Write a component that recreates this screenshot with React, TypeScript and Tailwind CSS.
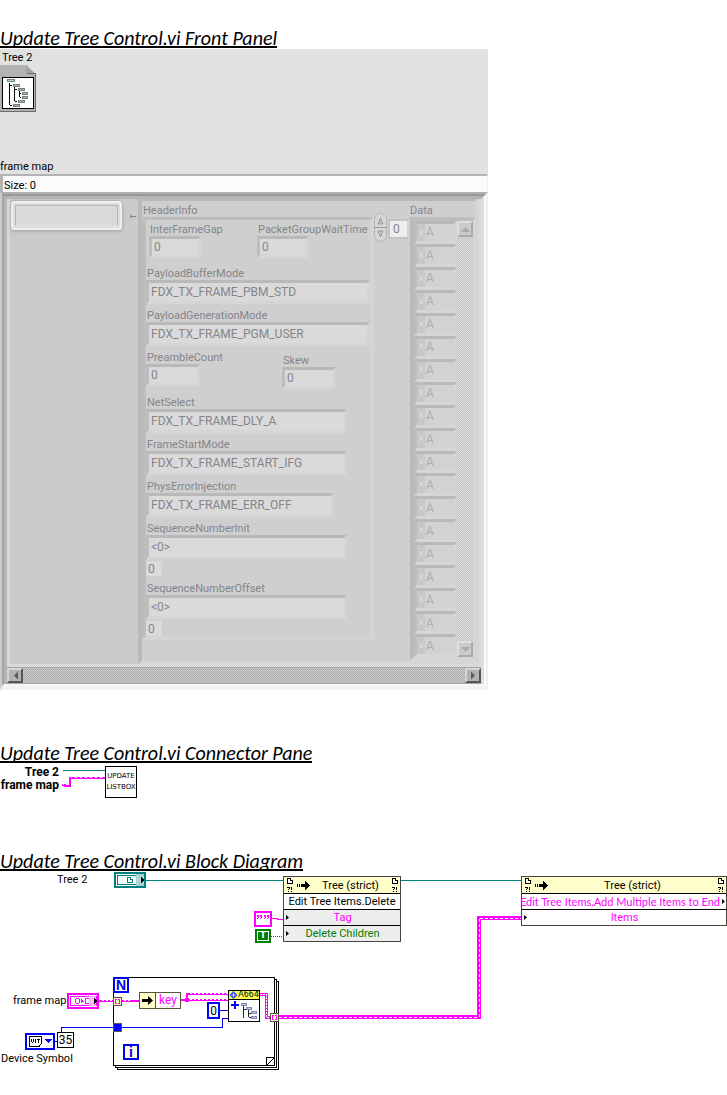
import React from "react";

const bevel =
  "border-[3px] border-t-[#b9b9b9] border-l-[#bdbdbd] border-r-[#d4d4d4] border-b-[#d6d6d6]";

function Heading({ children }: { children: React.ReactNode }) {
  return (
    <h2 className="w-fit border-b-2 border-black pt-1.5 font-['Carlito','Lato',sans-serif] text-[20px] leading-4 italic whitespace-nowrap text-black">
      {children}
    </h2>
  );
}

function Field({ id, label, value, width, size = "h-6", tone = "" }: { id: string; label: string; value: string; width: string; size?: string; tone?: string }) {
  return (
    <div className={"flex flex-col " + tone}>
      <label htmlFor={id} className="pt-[3px] pl-px leading-[13px] whitespace-nowrap">{label}</label>
      <input id={id} readOnly defaultValue={value} className={`${bevel} ${size} ${width} bg-[#dadada] px-0.5 text-xs outline-none`} />
    </div>
  );
}

function Offset({ label }: { label: string }) {
  return <input aria-label={label} readOnly defaultValue="0" className="mt-0.5 block h-[15px] w-4 bg-[#dadada] px-0.5 text-xs outline-none" />;
}

function TreeRefIcon() {
  return (
    <svg width="36" height="48" viewBox="0 0 36 48" shapeRendering="crispEdges" aria-hidden="true">
      <path d="M0 0H26V8H35V46H0Z" fill="#b2b2b2" />
      <path d="M26 0V8H35Z" fill="#a4a4a4" />
      <path d="M26.500 8.500H35.500V46.500H0" fill="none" stroke="#6d6d6d" />
      <rect x="2.500" y="12.500" width="31" height="31" fill="#fff" stroke="#000" />
      <path d="M9.500 18V40M9.500 20.500H12M9.500 40.500H12M14.500 22V36M14.500 24.500H17M14.500 36.500H17M19.500 26V32M19.500 28.500H21M19.500 32.500H21" stroke="#000" fill="none" />
      <g fill="#9fb0ab" stroke="#77827f">
        <rect x="7.500" y="14.500" width="7" height="2" fill="#9fd6c8" />
        <rect x="13.500" y="19.500" width="6" height="2" />
        <rect x="18.500" y="23.500" width="6" height="2" />
        <rect x="22.500" y="27.500" width="5" height="2" />
        <rect x="22.500" y="31.500" width="5" height="2" />
        <rect x="18.500" y="35.500" width="6" height="2" />
        <rect x="13.500" y="39.500" width="6" height="2" />
      </g>
    </svg>
  );
}

function Arrow({ d, fill }: { d: string; fill: string }) {
  return (
    <svg width="9" height="9" viewBox="0 0 9 9" aria-hidden="true"><path d={d} fill={fill} /></svg>
  );
}

function FrontPanel() {
  return (
    <section className="mt-px w-fit bg-[#e1e1e1] text-[11px] text-black">
      <div className="flex h-[125px] flex-col justify-between">
        <div className="flex flex-col items-start">
          <span className="pt-0.5 pl-0.5 leading-[14px]">Tree 2</span>
          <TreeRefIcon />
        </div>
        <span className="leading-[14px]">frame map</span>
      </div>
      <div className="border-t-2 border-r border-l-[3px] border-[#b4b4b4] border-r-[#eee]">
        <div className="bg-[#fbfbfb] pt-[3px] pl-px leading-[13px]">Size: 0</div>
      </div>

      <div className="border-2 border-t-[#b0b0b0] border-r-[#f0f0f0] border-b-4 border-b-[#f2f2f2] border-l-[#cbcbcb]">
        <div className="border-2 border-t-[#989898] border-r-[#fafafa] border-b-[#f7f7f7] border-l-[#a4a4a4]">
          <div className="border-[3px] border-b-0 border-t-[#b4b4b4] border-r-[#dedede] border-l-[#b4b4b4] bg-[#cacaca] text-[#85858a]">
            <div className="flex border-[3px] border-t-0 border-[#d9d9d9]">
              <div className="flex w-32 items-start gap-1.5 pt-px">
                <div className="rounded border border-[#b5b5b5] bg-[#dedede] shadow">
                  <div className="rounded border-2 border-[#efefef] p-0.5">
                    <input aria-label="Frame key" readOnly className="block h-[21px] w-[103px] border border-[#b4b4b4] border-b-[#e5e5e5] bg-[#d9d9d9] outline-none" />
                  </div>
                </div>
                <svg width="8" height="24" viewBox="0 0 8 24" aria-hidden="true"><path d="M1 16.500H7M2 14.500V18L4 16" fill="none" stroke="#858585" /></svg>
              </div>

              <div className="flex border-4 border-t-2 border-r-[3px] border-b-[3px] border-t-[#bababa] border-r-[#d4d4d4] border-b-[#d6d6d6] border-l-[#b9b9b9] bg-[#cfcfcf]">
                <div className="flex flex-col">
                  <div className="pt-[3px] pl-px leading-[13px]">HeaderInfo</div>
                  <div className="flex h-[423px] w-[232px] flex-col gap-0.5 border-4 border-t-[3px] border-t-[#bdbdbd] border-r-[#d4d4d4] border-b-[#d4d4d4] border-l-[#bdbdbd]">
                    <div className="mb-1 flex gap-14 pl-[3px]">
                      <Field id="gap" label="InterFrameGap" value="0" width="w-[52px]" size="h-[22px]" tone="w-[52px]" />
                      <Field id="wait" label="PacketGroupWaitTime" value="0" width="w-[52px]" size="h-[22px]" />
                    </div>
                    <Field id="pbm" label="PayloadBufferMode" value="FDX_TX_FRAME_PBM_STD" width="w-full" />
                    <Field id="pgm" label="PayloadGenerationMode" value="FDX_TX_FRAME_PGM_USER" width="w-full" />
                    <div className="mb-0.5 flex gap-[82px]">
                      <Field id="preamble" label="PreambleCount" value="0" width="w-[54px]" size="h-[22px]" tone="w-[54px]" />
                      <Field id="skew" label="Skew" value="0" width="w-[54px]" size="h-[22px]" tone="pt-[3px]" />
                    </div>
                    <Field id="net" label="NetSelect" value="FDX_TX_FRAME_DLY_A" width="w-[201px]" />
                    <Field id="start" label="FrameStartMode" value="FDX_TX_FRAME_START_IFG" width="w-[201px]" />
                    <Field id="phys" label="PhysErrorInjection" value="FDX_TX_FRAME_ERR_OFF" width="w-[188px]" />
                    <div className="mb-px">
                      <Field id="init" label="SequenceNumberInit" value="<0>" width="w-[201px]" />
                      <Offset label="SequenceNumberInit index" />
                    </div>
                    <div>
                      <Field id="offset" label="SequenceNumberOffset" value="<0>" width="w-[201px]" />
                      <Offset label="SequenceNumberOffset index" />
                    </div>
                  </div>
                </div>

                <div className="flex items-start pt-3 pr-px">
                  <svg width="14" height="30" viewBox="0 0 14 30" aria-hidden="true">
                    <rect x="0.500" y="0.500" width="12" height="28" rx="6" fill="#d7d7d7" stroke="#b5b5b5" />
                    <path d="M0 14.500H13" stroke="#999" />
                    <path d="M4 11L6.500 5L9 11ZM4 18H9L6.500 24Z" fill="#c5c5c5" stroke="#999" />
                  </svg>
                  <input aria-label="Data index" readOnly defaultValue="0" className="mt-1.5 h-[20px] w-[21px] border-2 border-[#c3c3c3] border-r-[#d4d4d4] bg-[#eeeeee] pl-[3px] text-xs outline-none" />
                </div>

                <div className="flex flex-col">
                  <div className="pt-[3px] leading-[13px]">Data</div>
                  <div className="flex h-[444px] border-4 border-r-2 border-t-[#bdbdbd] border-r-[#d6d6d6] border-b-[#d6d6d6] border-l-[#bababa]">
                    <div className="flex flex-col">
                      {Array.from({ length: 19 }, (_, i) => (
                        <div key={i} className={`${bevel} flex h-[23px] w-[43px] items-center bg-[#d2d2d2]`}>
                          <span className="flex h-full w-2 items-center bg-[#c7c8cc] pl-0.5 text-[9px] text-[#dfe0e5]">x</span>
                          <input aria-label={`Data ${i}`} readOnly defaultValue="A" className="h-4 w-6 pl-px text-xs text-[#aeaeae] outline-none" />
                        </div>
                      ))}
                    </div>
                    <div className="flex w-4 flex-col justify-between bg-[repeating-conic-gradient(#c6c6c6_0_25%,#dadada_0_50%)] bg-[length:2px_2px]">
                      <button aria-label="Scroll up" className="flex h-4 w-4 items-center justify-center border-2 border-[#dedede] border-r-[#aaa] border-b-[#aaa] bg-[#cbcbcb]"><Arrow d="M0 7L4.500 2L9 7Z" fill="#aaa" /></button>
                      <button aria-label="Scroll down" className="flex h-4 w-4 items-center justify-center border-2 border-[#dedede] border-r-[#aaa] border-b-[#aaa] bg-[#cbcbcb]"><Arrow d="M0 2L4.500 7L9 2Z" fill="#aaa" /></button>
                    </div>
                  </div>
                </div>
              </div>
            </div>
            <div className="flex h-[17px] justify-between border-y border-[#a5a5a5] bg-[repeating-conic-gradient(#aaaaaa_0_25%,#cecece_0_50%)] bg-[length:2px_2px]">
              <button aria-label="Scroll left" className="flex w-4 items-center justify-center border-2 border-[#d4d4d4] border-r-[#555] border-b-[#555] bg-[#b2b2b2]"><Arrow d="M7 0.500L3 4.500L7 8.500Z" fill="#5c5c5c" /></button>
              <button aria-label="Scroll right" className="flex w-4 items-center justify-center border-2 border-[#d4d4d4] border-r-[#555] border-b-[#555] bg-[#b2b2b2]"><Arrow d="M2 0.500L6 4.500L2 8.500Z" fill="#5c5c5c" /></button>
            </div>
          </div>
        </div>
      </div>
    </section>
  );
}

function ConnectorPane() {
  return (
    <section className="mt-[3px] flex items-start text-black">
      <div className="flex w-[60px] flex-col items-end pr-px text-xs leading-[13px] font-bold whitespace-nowrap">
        <span>Tree 2</span>
        <span>frame map</span>
      </div>
      <svg width="45" height="34" viewBox="60 766 45 34" shapeRendering="crispEdges" aria-hidden="true">
        <path d="M63 770.500H105" stroke="#008080" />
        <path d="M62 784.500H65V785.500H70V778H105" fill="none" stroke="#ff00ff" strokeWidth="2" />
        <path d="M63 784.500H66M71 777.500H105" stroke="#fff" strokeDasharray="2 3" strokeDashoffset="1" />
      </svg>
      <div className="flex h-8 w-8 flex-col items-center justify-center border border-black bg-white font-['DejaVu_Sans',sans-serif] text-[7px] leading-[11px]">
        <span>UPDATE</span>
        <span>LISTBOX</span>
      </div>
    </section>
  );
}

function RefMark() {
  return (
    <svg width="6" height="16" viewBox="0 0 6 16" shapeRendering="crispEdges" aria-hidden="true">
      <path d="M0.500 1.500H3.500V3.500H5.500V6.500H0.500Z" fill="#fff" stroke="#000" />
      <path d="M0 10.500H2M2.500 10V12M1 12.500H2M1 14.500H2M4.500 10V13M4.500 14V15" stroke="#000" fill="none" />
    </svg>
  );
}

function NodeHeader() {
  return (
    <div className="flex h-[17px] items-center justify-between bg-[#ffffcc] pr-0.5 pl-[3px]">
      <span className="flex items-center gap-1">
        <RefMark />
        <svg width="14" height="9" viewBox="0 0 14 9" shapeRendering="crispEdges" aria-hidden="true"><path d="M0 3H1V6H0ZM2 3H3V6H2ZM4 3H8V0H9L13 4.500L9 9H8V6H4Z" fill="#000" /></svg>
      </span>
      <span className="pr-0.5">Tree (strict)</span>
      <RefMark />
    </div>
  );
}

function Tick() {
  return <svg width="3" height="5" viewBox="0 0 3 5" aria-hidden="true"><path d="M0 0L3 2.500L0 5Z" /></svg>;
}

function Tunnel() {
  return (
    <svg width="9" height="9" viewBox="0 0 9 9" shapeRendering="crispEdges" aria-hidden="true">
      <rect x="0.500" y="0.500" width="8" height="8" fill="#ffffcc" stroke="#55553c" />
      <path d="M4 2.500H2.500V6.500H4M5 2.500H6.500V6.500H5" fill="none" stroke="#ff00ff" />
    </svg>
  );
}

const braid = "M279 1017H479V918H521";
const subBraid = "M260 994.500H266.500V1017.500H270";

function BlockDiagram() {
  return (
    <section className="relative h-[210px] min-w-[727px] text-[11px] whitespace-nowrap text-black">
      <svg className="absolute top-0 left-0" width="727" height="210" viewBox="0 871 727 210" shapeRendering="crispEdges" aria-hidden="true">
        <path d="M117.500 981.500H278.500V1069.500H117.500Z" fill="#fff" stroke="#000" />
        <path d="M115.500 979.500H276.500V1067.500H115.500Z" fill="#fff" stroke="#000" />
        <path d="M113.500 977.500H274.500V1065.500H113.500Z" fill="#fff" stroke="#000" />
        <path d="M274.500 1057.500H266.500V1065.500L274.500 1057.500" fill="#fff" stroke="#000" />
        <path d="M146 880.500H283M401 880.500H521" stroke="#008080" />
        <path d="M272 918.500H277V919.500H283" fill="none" stroke="#ff00ff" />
        <path d="M271 936.500H283" stroke="#007f00" strokeDasharray="1 1" />
        <path d={braid} fill="none" stroke="#ff00ff" strokeWidth="4" />
        <path d={braid} fill="none" stroke="#fff" strokeWidth="1" strokeDasharray="3 2" />
        <path d={subBraid} fill="none" stroke="#ff00ff" strokeWidth="3" />
        <path d={subBraid} fill="none" stroke="#fff" strokeWidth="1" strokeDasharray="2 1" />
        <path d="M99 1001H139M181 1000H187M187 994V1000M186 994H228M187 1000H228" stroke="#ff00ff" strokeWidth="2" />
        <path d="M102 1000.500H113M190 993.500H228M190 999.500H228M124 1000.500H130" stroke="#fff" strokeDasharray="2 2" />
        <circle cx="187" cy="1000" r="2.500" fill="#ff00ff" />
        <path d="M54 1041.500H57M61.500 1032V1027.500H222.500V1018.500H228M220 1010.500H228" fill="none" stroke="#0000ff" />
        <rect x="113.500" y="1023.500" width="8" height="8" fill="#0000ff" stroke="#555" />
      </svg>

      <span className="absolute top-px left-[57px] leading-4">Tree 2</span>
      <svg className="absolute top-px left-[114px]" width="32" height="16" viewBox="0 0 32 16" shapeRendering="crispEdges" aria-hidden="true">
        <rect x="1" y="1" width="30" height="14" fill="#fff" stroke="#008080" strokeWidth="2" />
        <rect x="3.500" y="3.500" width="26" height="9" fill="#fff" stroke="#008080" />
        <rect x="22" y="2" width="8" height="12" fill="#a8d4d4" />
        <path d="M13.500 5.500H16.500V7.500H18.500V10.500H13.500Z" fill="none" stroke="#008080" />
        <path d="M27 5L30 8L27 11Z" />
      </svg>

      <div className="absolute top-[5px] left-[283px] w-[118px] divide-y divide-black border border-[#44443a] leading-[15px]">
        <NodeHeader />
        <div className="bg-white text-center">Edit Tree Items.Delete</div>
        <div className="flex items-center bg-[#ededed] pr-1 pl-0.5"><Tick /><span className="flex-1 text-center text-[#ff00ff]">Tag</span></div>
        <div className="flex items-center bg-[#ededed] pr-1 pl-0.5"><Tick /><span className="flex-1 text-center text-[#007f00]">Delete Children</span></div>
      </div>

      <svg className="absolute top-10 left-[254px]" width="18" height="16" viewBox="0 0 18 16" shapeRendering="crispEdges" aria-hidden="true">
        <rect x="1" y="1" width="16" height="14" fill="#fff" stroke="#ff00ff" strokeWidth="2" />
        <path d="M3 4H5V7H4V8H3V7H4V6H3ZM6 4H8V7H7V8H6V7H7V6H6ZM10 4H12V7H11V8H10V7H11V6H10ZM13 4H15V7H14V8H13V7H14V6H13Z" fill="#ff00ff" />
      </svg>
      <div className="absolute top-[58px] left-[255px] flex h-[14px] w-4 border-2 border-[#007f00] bg-white p-px">
        <span className="flex flex-1 items-center justify-center bg-[#007f00] font-['DejaVu_Sans',sans-serif] text-[8px] leading-none font-bold text-white">T</span>
      </div>

      <div className="absolute top-[5px] left-[521px] w-[206px] divide-y divide-black border border-[#44443a] leading-[15px]">
        <NodeHeader />
        <div className="flex items-center justify-end gap-0.5 bg-white pr-px font-['Lato',sans-serif] text-[#ff00ff]"><span>Edit Tree Items.Add Multiple Items to End</span><span className="text-black"><Tick /></span></div>
        <div className="flex items-center bg-white pr-1 pl-0.5"><Tick /><span className="flex-1 text-center text-[#ff00ff]">Items</span></div>
      </div>

      <span className="absolute top-[122px] left-[13px] leading-4">frame map</span>
      <svg className="absolute top-[122px] left-[67px]" width="32" height="16" viewBox="0 0 32 16" shapeRendering="crispEdges" aria-hidden="true">
        <rect x="1" y="1" width="30" height="14" fill="#fff" stroke="#ff00ff" strokeWidth="2" />
        <rect x="3.500" y="3.500" width="26" height="9" fill="#fff" stroke="#ff00ff" />
        <rect x="22" y="3" width="7" height="10" fill="#ffb5ff" />
        <path d="M9 5.500H12M9 10.500H12M8.500 6V10M12.500 6V10M14.500 6V10M15.500 7V9M16.500 8V9M22 5.500H18.500V10.500H22" fill="none" stroke="#ff00ff" />
        <path d="M27 5L30 8L27 11Z" />
      </svg>
      <span className="absolute top-[126px] left-[113px]"><Tunnel /></span>
      <span className="absolute top-[142px] left-[270px]"><Tunnel /></span>

      <div className="absolute top-[106px] left-[113px] flex h-4 w-4 items-center justify-center border-2 border-[#0000ff] bg-[#ffffdd] font-['Liberation_Sans',sans-serif] text-sm leading-none font-bold text-[#0000ff]">N</div>
      <div className="absolute top-[173px] left-[123px] flex h-4 w-4 items-center justify-center border-2 border-[#0000ff] bg-[#ffffdd] font-['Liberation_Sans',sans-serif] text-sm leading-none font-bold text-[#0000ff]">i</div>

      <div className="absolute top-[121px] left-[139px] flex h-[17px] w-[42px] border border-[#55553c] bg-white leading-[15px]">
        <span className="flex w-4 items-center justify-center border-r border-[#55553c] bg-[#ffffcc]">
          <svg width="11" height="9" viewBox="0 0 11 9" aria-hidden="true"><path d="M0 3H6V0L11 4.500L6 9V6H0Z" /></svg>
        </span>
        <span className="flex-1 text-center text-xs leading-[15px] text-[#ff00ff]">key</span>
      </div>

      <div className="absolute top-[131px] left-[207px] flex h-[17px] w-[13px] items-center justify-center border-2 border-[#0000ff] bg-white text-xs leading-none">0</div>

      <div className="absolute top-[119px] left-[228px] h-8 w-8 border border-black bg-white">
        <div className="flex h-[9px] items-center justify-end border-b border-black bg-[#ffff55] font-['DejaVu_Sans',sans-serif] text-[8px] leading-[8px]">
          <svg width="9" height="8" viewBox="0 0 9 8" aria-hidden="true"><path d="M4.500 0L8.500 4L4.500 8L0.500 4Z" fill="#2040ff" /><path d="M2 4H7M4.500 1.500V6.500" stroke="#fff" strokeWidth="0.700" /></svg>
          A664
        </div>
        <svg width="30" height="21" viewBox="0 0 30 21" shapeRendering="crispEdges" aria-hidden="true">
          <path d="M2 4H5V1H7V4H10V6H7V9H5V6H2Z" fill="#0000ff" />
          <path d="M14.500 6V18M14.500 9.500H18M19.500 10V17M20 13.500H23M20 17.500H23" stroke="#222" fill="none" />
          <g fill="#bcc6e4" stroke="#7f89ad"><rect x="12.500" y="3.500" width="5" height="2" /><rect x="17.500" y="7.500" width="5" height="2" /><rect x="22.500" y="11.500" width="5" height="2" /><rect x="22.500" y="16.500" width="5" height="2" /></g>
        </svg>
      </div>

      <button aria-label="Choose device symbol" className="absolute top-[162px] left-[25px] h-[17px] w-[30px]">
        <svg width="30" height="17" viewBox="0 0 30 17" shapeRendering="crispEdges" aria-hidden="true">
          <rect x="1" y="1" width="28" height="15" fill="#fff" stroke="#0000ff" strokeWidth="2" />
          <path d="M4.500 3.500H16.500V10.500L14 13.500H4.500Z" fill="#fff" stroke="#000" />
          <path d="M6.500 6V9M7 9.500H8M8.500 6V9M10.500 6V10M12 6.500H15M13.500 6V10" stroke="#000" fill="none" />
          <path d="M20 6H27L23.500 10.500Z" fill="#0000ff" />
        </svg>
      </button>
      <div className="absolute top-[161px] left-[57px] flex h-4 w-[17px] items-center justify-center border border-black bg-white text-xs leading-none">35</div>
      <span className="absolute top-[180px] left-px leading-4">Device Symbol</span>
    </section>
  );
}

export default function App() {
  return (
    <main className="min-h-screen overflow-x-hidden bg-white pt-6 font-['Roboto','Liberation_Sans',sans-serif]">
      <Heading>Update Tree Control.vi Front Panel</Heading>
      <FrontPanel />
      <div className="pt-[49px]">
        <Heading>Update Tree Control.vi Connector Pane</Heading>
        <ConnectorPane />
      </div>
      <div className="pt-[47px]">
        <Heading>Update Tree Control.vi Block Diagram</Heading>
        <BlockDiagram />
      </div>
    </main>
  );
}
